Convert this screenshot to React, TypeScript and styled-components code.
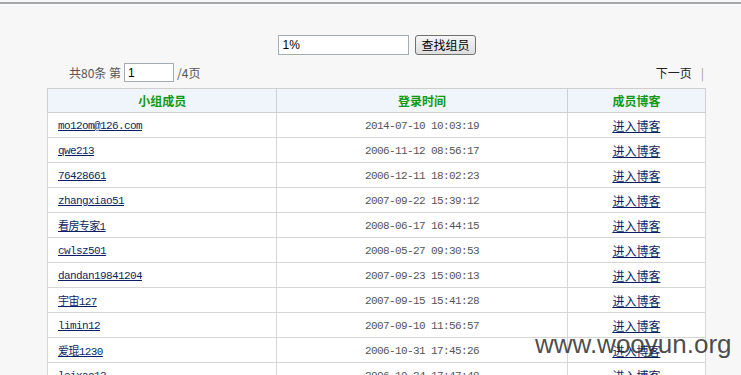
import styled, { createGlobalStyle } from 'styled-components';

const GlobalStyle = createGlobalStyle`
  html, body {
    margin: 0;
    padding: 0;
    background: #f7f7f7;
  }
  body {
    font-family: "Liberation Sans", "Noto Sans CJK SC", sans-serif;
    font-size: 12px;
    color: #333;
  }
`;

const Page = styled.div`
  position: relative;
  width: 741px;
  height: 375px;
  overflow: hidden;
  border-top: 2px solid #a3a9a9;
  margin-top: 2px;
  box-shadow: inset 0 2px 0 #fbfbfb, inset 0 3px 0 #eef3f8;
`;

const Content = styled.div`
  width: 659px;
  margin-left: 47px;
  padding-top: 31px;
`;

const SearchBar = styled.form`
  display: flex;
  justify-content: center;
  align-items: center;
  gap: 6px;
  padding-left: 1px;
  height: 20px;
`;

const TextInput = styled.input<{ $w: number; $h: number }>`
  box-sizing: border-box;
  width: ${(p) => p.$w}px;
  height: ${(p) => p.$h}px;
  border: 1px solid #a5acb2;
  background: #fff;
  padding: 0 3px;
  font-family: "Liberation Sans", "Noto Sans CJK SC", sans-serif;
  font-size: 12px;
  color: #000;
  outline: none;
`;

const SearchButton = styled.button`
  height: 20px;
  padding: 0 5px;
  border: 1px solid #707070;
  border-radius: 3px;
  background: linear-gradient(#f6f6f6, #dedede);
  font-family: "Noto Sans CJK SC", sans-serif;
  font-size: 12px;
  color: #000;
  line-height: 16px;
`;

const Pager = styled.div`
  display: flex;
  align-items: center;
  justify-content: space-between;
  height: 19px;
  margin-top: 8px;
  margin-bottom: 6px;
  padding-left: 22px;
  color: #555;
  font-family: "Noto Sans CJK SC", sans-serif;
`;

const PagerLeft = styled.div`
  display: flex;
  align-items: center;
  gap: 3px;
`;

const PagerRight = styled.div`
  display: flex;
  align-items: center;
  gap: 9px;
  padding-right: 2px;
  color: #222;
`;

const Sep = styled.span`
  color: #999;
`;

const Table = styled.table`
  width: 659px;
  border-collapse: collapse;
  background: #fff;
  border: 1px solid #b5b5b5;
  table-layout: fixed;
`;

const Th = styled.th<{ $w: number }>`
  width: ${(p) => p.$w}px;
  height: 23px;
  padding: 0;
  background: #f0f5fb;
  border: 1px solid #cfcfcf;
  color: #119911;
  font-family: "Noto Sans CJK SC", sans-serif;
  font-size: 12px;
  font-weight: bold;
  text-align: center;
`;

const Td = styled.td<{ $align?: string }>`
  height: 24px;
  padding: 0 0 0 ${(p) => (p.$align === 'center' ? 0 : 10)}px;
  border: 1px solid #d6d6d6;
  text-align: ${(p) => p.$align || 'left'};
  vertical-align: middle;
`;

const NameLink = styled.a`
  color: #0a1f66;
  text-decoration: underline;
  font-family: "Liberation Mono", "Noto Sans CJK SC", monospace;
  font-size: 11px;
  letter-spacing: -0.6px;
`;

const Time = styled.span`
  color: #555;
  font-family: "Liberation Mono", monospace;
  font-size: 11px;
  letter-spacing: -0.6px;
`;

const BlogLink = styled.a`
  color: #0a1f66;
  text-decoration: underline;
  font-family: "Noto Sans CJK SC", sans-serif;
  font-size: 12px;
`;

const Watermark = styled.div`
  position: absolute;
  left: 535px;
  top: 325px;
  font-family: "Liberation Sans", sans-serif;
  font-size: 26px;
  color: rgba(45, 45, 45, 0.85);
  pointer-events: none;
`;

const members = [
  ['mo12om@126.com', '2014-07-10 10:03:19'],
  ['qwe213', '2006-11-12 08:56:17'],
  ['76428661', '2006-12-11 18:02:23'],
  ['zhangxiao51', '2007-09-22 15:39:12'],
  ['看房专家1', '2008-06-17 16:44:15'],
  ['cwlsz501', '2008-05-27 09:30:53'],
  ['dandan19841204', '2007-09-23 15:00:13'],
  ['宇宙127', '2007-09-15 15:41:28'],
  ['limin12', '2007-09-10 11:56:57'],
  ['爱琨1230', '2006-10-31 17:45:26'],
  ['leixao13', '2006-10-24 17:47:48'],
];

const App = () => {
  return (
    <Page>
      <GlobalStyle />
      <Content>
        <SearchBar onSubmit={(e) => e.preventDefault()}>
          <TextInput $w={131} $h={20} defaultValue="1%" />
          <SearchButton type="submit">查找组员</SearchButton>
        </SearchBar>
        <Pager>
          <PagerLeft>
            <span>共80条 第</span>
            <TextInput $w={50} $h={19} defaultValue="1" />
            <span>/4页</span>
          </PagerLeft>
          <PagerRight>
            <span>下一页</span>
            <Sep>|</Sep>
          </PagerRight>
        </Pager>
        <Table>
          <thead>
            <tr>
              <Th $w={228}>小组成员</Th>
              <Th $w={289}>登录时间</Th>
              <Th $w={137}>成员博客</Th>
            </tr>
          </thead>
          <tbody>
            {members.map(([name, time]) => (
              <tr key={name}>
                <Td>
                  <NameLink href="#">{name}</NameLink>
                </Td>
                <Td $align="center">
                  <Time>{time}</Time>
                </Td>
                <Td $align="center">
                  <BlogLink href="#">进入博客</BlogLink>
                </Td>
              </tr>
            ))}
          </tbody>
        </Table>
      </Content>
      <Watermark>www.wooyun.org</Watermark>
    </Page>
  );
};

export default App;
